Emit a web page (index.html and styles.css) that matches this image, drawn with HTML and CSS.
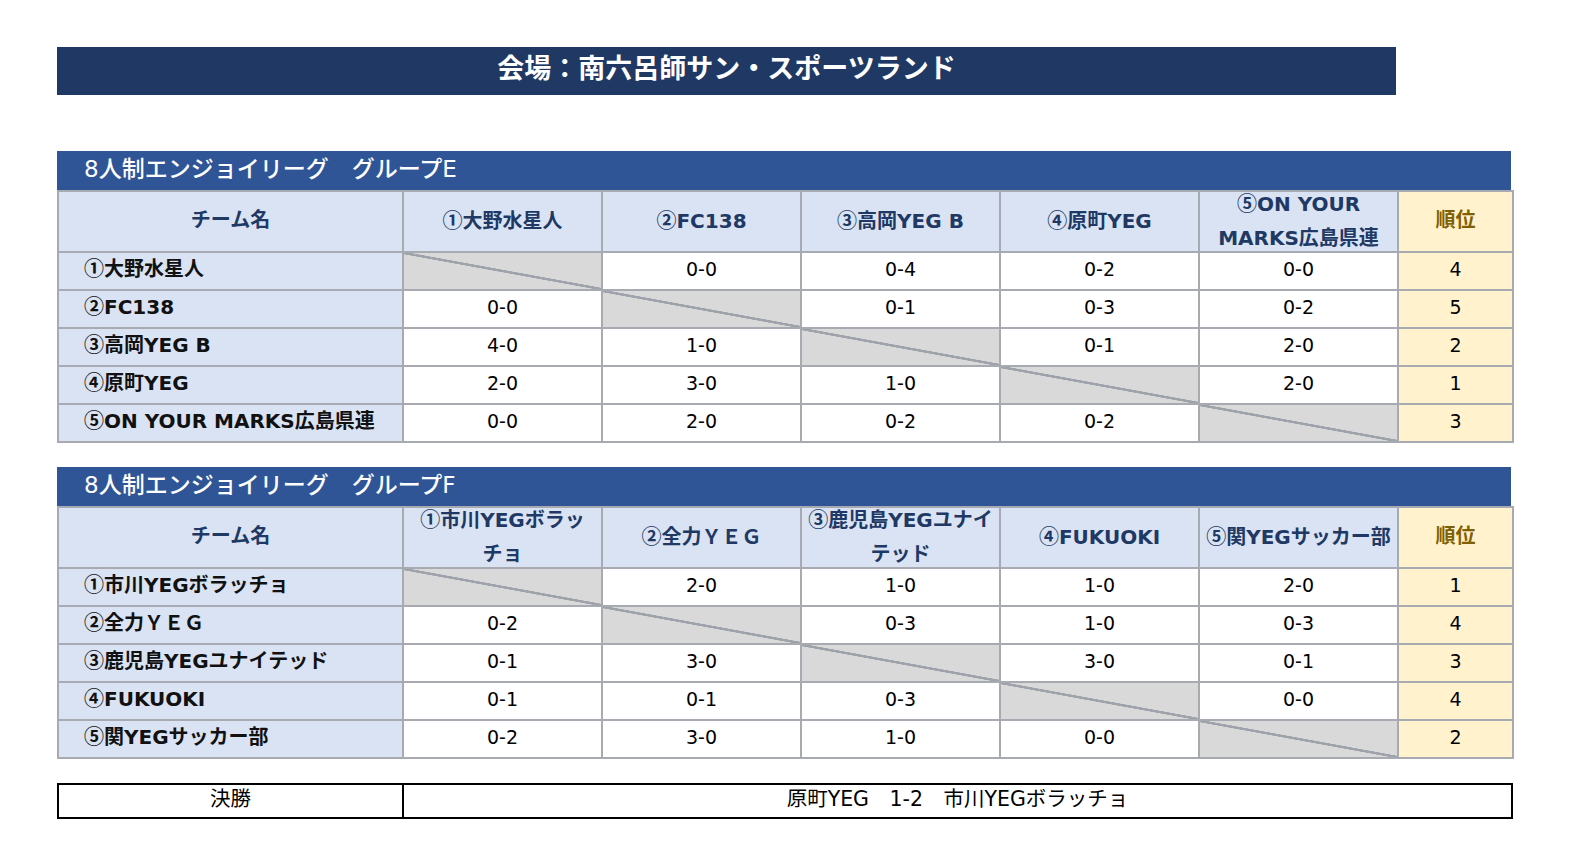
FILE: index.html
```html
<!DOCTYPE html>
<html lang="ja">
<head>
<meta charset="utf-8">
<title>会場：南六呂師サン・スポーツランド</title>
<link rel="stylesheet" href="styles.css">
</head>
<body>
<div class="page">
  <div class="venue">会場：南六呂師サン・スポーツランド</div>

  <section class="group">
    <div class="group-title">8人制エンジョイリーグ　グループE</div>
    <table class="league">
      <colgroup>
        <col class="c-name"><col class="c-team"><col class="c-team"><col class="c-team"><col class="c-team"><col class="c-team"><col class="c-rank">
      </colgroup>
      <thead>
        <tr>
          <th class="h"><div class="hc">チーム名</div></th>
          <th class="h"><div class="hc"><span><span class="n">①</span>大野水星人</span></div></th>
          <th class="h"><div class="hc"><span><span class="n">②</span>FC138</span></div></th>
          <th class="h"><div class="hc"><span><span class="n">③</span>高岡YEG B</span></div></th>
          <th class="h"><div class="hc"><span><span class="n">④</span>原町YEG</span></div></th>
          <th class="h"><div class="hc"><span><span class="n">⑤</span>ON YOUR</span><span>MARKS広島県連</span></div></th>
          <th class="h rank-h"><div class="hc">順位</div></th>
        </tr>
      </thead>
      <tbody>
        <tr><th class="team"><span class="n">①</span>大野水星人</th><td class="x"></td><td>0-0</td><td>0-4</td><td>0-2</td><td>0-0</td><td class="rank">4</td></tr>
        <tr><th class="team"><span class="n">②</span>FC138</th><td>0-0</td><td class="x"></td><td>0-1</td><td>0-3</td><td>0-2</td><td class="rank">5</td></tr>
        <tr><th class="team"><span class="n">③</span>高岡YEG B</th><td>4-0</td><td>1-0</td><td class="x"></td><td>0-1</td><td>2-0</td><td class="rank">2</td></tr>
        <tr><th class="team"><span class="n">④</span>原町YEG</th><td>2-0</td><td>3-0</td><td>1-0</td><td class="x"></td><td>2-0</td><td class="rank">1</td></tr>
        <tr><th class="team"><span class="n">⑤</span>ON YOUR MARKS広島県連</th><td>0-0</td><td>2-0</td><td>0-2</td><td>0-2</td><td class="x"></td><td class="rank">3</td></tr>
      </tbody>
    </table>
  </section>

  <section class="group">
    <div class="group-title">8人制エンジョイリーグ　グループF</div>
    <table class="league">
      <colgroup>
        <col class="c-name"><col class="c-team"><col class="c-team"><col class="c-team"><col class="c-team"><col class="c-team"><col class="c-rank">
      </colgroup>
      <thead>
        <tr>
          <th class="h"><div class="hc">チーム名</div></th>
          <th class="h"><div class="hc"><span><span class="n">①</span>市川YEGボラッ</span><span>チョ</span></div></th>
          <th class="h"><div class="hc"><span><span class="n">②</span>全力ＹＥＧ</span></div></th>
          <th class="h"><div class="hc"><span><span class="n">③</span>鹿児島YEGユナイ</span><span>テッド</span></div></th>
          <th class="h"><div class="hc"><span><span class="n">④</span>FUKUOKI</span></div></th>
          <th class="h"><div class="hc"><span><span class="n">⑤</span>関YEGサッカー部</span></div></th>
          <th class="h rank-h"><div class="hc">順位</div></th>
        </tr>
      </thead>
      <tbody>
        <tr><th class="team"><span class="n">①</span>市川YEGボラッチョ</th><td class="x"></td><td>2-0</td><td>1-0</td><td>1-0</td><td>2-0</td><td class="rank">1</td></tr>
        <tr><th class="team"><span class="n">②</span>全力ＹＥＧ</th><td>0-2</td><td class="x"></td><td>0-3</td><td>1-0</td><td>0-3</td><td class="rank">4</td></tr>
        <tr><th class="team"><span class="n">③</span>鹿児島YEGユナイテッド</th><td>0-1</td><td>3-0</td><td class="x"></td><td>3-0</td><td>0-1</td><td class="rank">3</td></tr>
        <tr><th class="team"><span class="n">④</span>FUKUOKI</th><td>0-1</td><td>0-1</td><td>0-3</td><td class="x"></td><td>0-0</td><td class="rank">4</td></tr>
        <tr><th class="team"><span class="n">⑤</span>関YEGサッカー部</th><td>0-2</td><td>3-0</td><td>1-0</td><td>0-0</td><td class="x"></td><td class="rank">2</td></tr>
      </tbody>
    </table>
  </section>

  <table class="final">
    <colgroup><col class="c-name"><col class="c-rest"></colgroup>
    <tr><td>決勝</td><td>原町YEG　1-2　市川YEGボラッチョ</td></tr>
  </table>
</div>
</body>
</html>
```

FILE: styles.css
```css
html, body {
  margin: 0;
  padding: 0;
  background: #ffffff;
}

body {
  font-family: "DejaVu Sans", "Noto Sans CJK JP", sans-serif;
  color: #000;
}

.page {
  padding: 47px 0 0 57px;
  display: flex;
  flex-direction: column;
  align-items: flex-start;
}

.n {
  font-family: "Noto Sans CJK JP", sans-serif;
}

.venue {
  width: 1339px;
  height: 48px;
  line-height: 40px;
  background: #203864;
  color: #ffffff;
  font-size: 27px;
  font-weight: bold;
  text-align: center;
  font-family: "Noto Sans CJK JP", sans-serif;
  margin-bottom: 56px;
}

.group {
  width: 1454px;
  margin-bottom: 24px;
}

.group-title {
  height: 39px;
  line-height: 36px;
  background: #2f5597;
  color: #ffffff;
  font-size: 23px;
  font-weight: 500;
  padding-left: 27px;
}

.league {
  width: 1454px;
  table-layout: fixed;
  border-collapse: collapse;
}

.c-name { width: 345px; }
.c-team { width: 199px; }
.c-rank { width: 115px; }
.c-rest { width: 1109px; }

.league th,
.league td {
  border: 2px solid #a7aab0;
  padding: 0 0 5px 0;
  font-size: 19px;
  line-height: 24px;
  white-space: nowrap;
  text-align: center;
  vertical-align: middle;
}

.league thead tr {
  height: 61px;
}

.league tbody tr {
  height: 38px;
}

.league .h {
  background: #dae3f3;
  color: #203864;
  font-weight: bold;
  font-size: 20px;
  padding: 0;
}

.hc {
  height: 58px;
  display: flex;
  flex-direction: column;
  justify-content: center;
  align-items: center;
  line-height: 34px;
  padding-bottom: 3px;
  box-sizing: border-box;
}

.league .rank-h {
  background: #fff2cc;
  color: #7f6000;
}

.league .team {
  background: #dae3f3;
  color: #111111;
  font-weight: bold;
  font-size: 20px;
  text-align: left;
  padding-left: 25px;
}

.league td {
  background: #ffffff;
  color: #000000;
  font-weight: normal;
}

.league td.rank {
  background: #fff2cc;
}

.league td.x {
  background: linear-gradient(to top right,
    #d9d9d9 calc(50% - 1.5px),
    #9ea2aa calc(50% - 1px),
    #9ea2aa calc(50% + 1px),
    #d9d9d9 calc(50% + 1.5px));
}

.final {
  width: 1454px;
  table-layout: fixed;
  border-collapse: collapse;
}

.final td {
  border: 2px solid #000000;
  height: 28px;
  padding: 0 0 4px 0;
  font-size: 20.5px;
  line-height: 24px;
  text-align: center;
  vertical-align: middle;
  background: #ffffff;
}
```
